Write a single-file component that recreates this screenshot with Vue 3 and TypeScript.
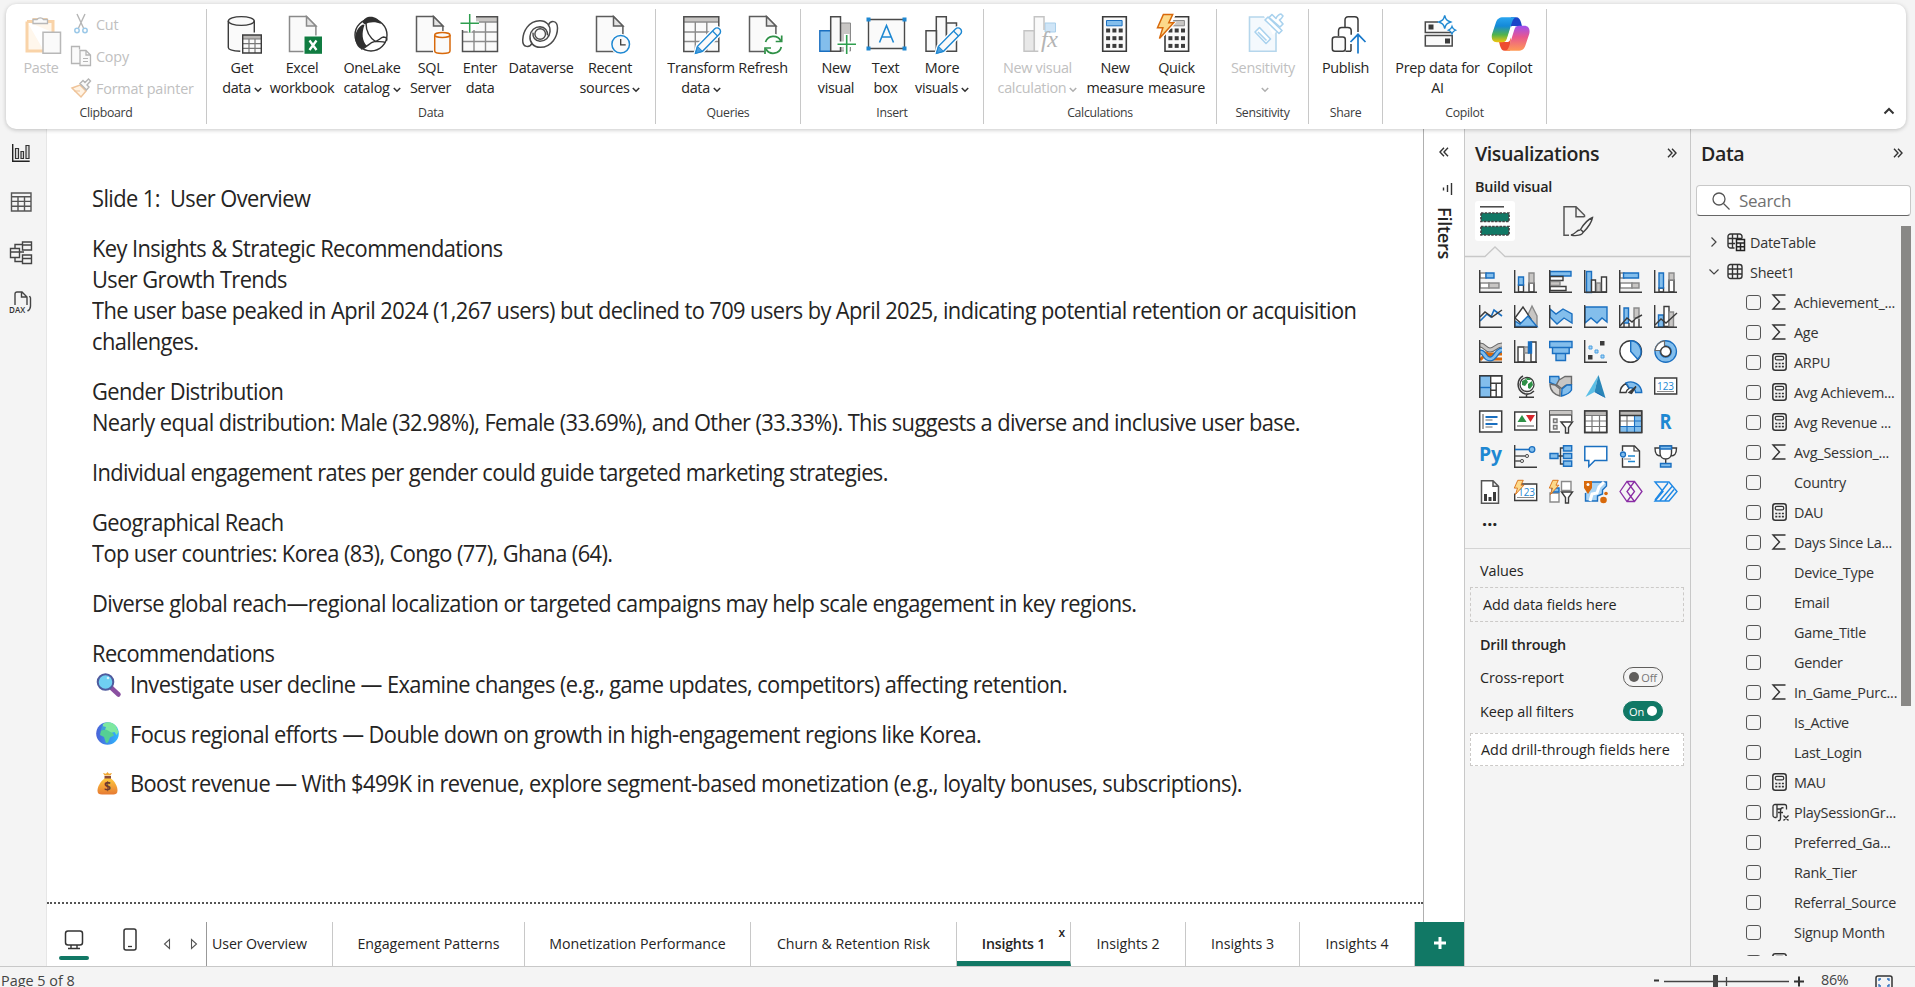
<script setup lang="ts">
interface Cmd { icon: string; lines: string[]; w: number; chevron?: boolean; off?: boolean }
interface Group { label: string; w: number; pad: number; items: Cmd[] }

const page = (x: number, stroke = '#5c5c5c') =>
  `<path d="M${x} 2.5h17l9.400 9.500v25.500h-26.400z" fill="#fafafa" stroke="${stroke}" stroke-width="1.500"/><path d="M${x + 17} 2.500v9.500h9.400z" fill="#e3e3e3" stroke="${stroke}" stroke-width="1.500"/>`
const pencil = `<path d="M14.500 39.300l2-7 17-17.300a3.500 3.500 0 0 1 5 5l-17 17.300z" fill="#fafafa" stroke="#fff" stroke-width="4"/><path d="M14.500 39.300l2-7 17-17.300a3.500 3.500 0 0 1 5 5l-17 17.300z" fill="#fafafa" stroke="#1e88d2" stroke-width="1.400"/><path d="M14.500 39.300l2-7 5 5z" fill="#4a9fe0" stroke="#1e88d2"/><path d="M31.500 17l5 5" stroke="#1e88d2" stroke-width="1.300"/>`
const table = (x: number) =>
  `<path d="M${x} 2.800h35v34.700h-35z" fill="#fafafa"/><path d="M${x} 2.800h35v5h-35z" fill="#c8c6c4"/><path d="M${x} 8h35M${x} 18h35M${x} 27.500h35M${x + 11.500} 8v29.500M${x + 23} 8v29.500" stroke="#8a8a8a" stroke-width="1.400"/><path d="M${x} 2.800h35v34.700h-35z" fill="none" stroke="#4f4f4f" stroke-width="1.500"/>`
const keys = (x: number) =>
  [16.5, 24.2, 31.9].map(y => [0, 6.3, 12.6].map(d => `<path d="M${x + d - 2} ${y - 2}h4v4h-4z" fill="#3b3b3b"/>`).join('')).join('')
const bolt = (s: number) =>
  `<path transform="scale(${s})" d="M6.500 .5h9.500l-4 8.500h5l-14.500 16 3.500-11h-5.500z" fill="#fcd98a" stroke="#d8690b" stroke-width="1.500"/>`

const big: Record<string, string> = {
  paste: `<path d="M6 8h7v-2h12v2h7v11M6 8v29.500h17" transform="translate(0,-.5)" fill="#fff7ec" stroke="#f9d3a8" stroke-width="3"/><path d="M12 9.500v-4h4a4 4 0 0 1 6.500 0h4v4z" fill="#fafafa" stroke="#b8b8b8" stroke-width="1.300"/><path d="M22 18.200h17.500v21h-17.500z" fill="#fafafa" stroke="#b8b8b8" stroke-width="1.500"/>`,
  getdata: `<path d="M6.300 7v26.500c0 2.300 5 3.500 13 3.500v-16h13v-14z" fill="#fafafa"/><ellipse cx="19.300" cy="7" rx="13" ry="4.400" fill="#fafafa" stroke="#3b3b3b" stroke-width="1.400"/><path d="M6.300 7v26.500c0 2.300 5 3.500 12 3.700M32.300 7v11.500" fill="none" stroke="#3b3b3b" stroke-width="1.400"/><path d="M20.700 21h18.600v18h-18.600z" fill="#fafafa"/><path d="M20.700 21h18.600v4h-18.600z" fill="#b9b7b5"/><path d="M20.700 25h18.600M20.700 29.700h18.600M20.700 34.300h18.600M27 25v14M33 25v14" stroke="#777" stroke-width="1.200"/><path d="M20.700 21h18.600v18h-18.600z" fill="none" stroke="#3b3b3b" stroke-width="1.400"/>`,
  excel: page(7.5, '#8a8a8a') + `<path d="M21.500 21.500h19v19h-19z" fill="#fff"/><path d="M22.500 22.500h17.500v17.300h-17.500z" fill="#107c41"/><path d="M27.500 26.500l7 9.500M34.500 26.500l-7 9.500" stroke="#fff" stroke-width="2.300"/>`,
  onelake: `<circle cx="19" cy="21" r="16" fill="#fff" stroke="#333" stroke-width="1.400"/><path d="M10.500 8.500c2-8 15-8 18.500 1.500c-5-2.500-12-2.500-16 .5z" fill="#2f2f2f"/><path d="M11 10.500c-8 4-10.500 16-4 23c2 2.500 6 1 8-1.500c-5-5-5.500-13-2.500-21z" fill="#2f2f2f"/><path d="M14 9c0 9 4 15 10 19M9 35c6-1 8-6.500 13.500-7.500c4 0 5.500-4 9-4.500c3 0 4 2 3 4M22.500 27.500c4 .5 8-.5 11 1" fill="none" stroke="#333" stroke-width="1.400"/>`,
  sql: page(5.5) + `<path d="M22 17h19v24h-19z" fill="#fff"/><path d="M23.700 21v16c0 3.300 15.300 3.300 15.300 0v-16" fill="#fafafa" stroke="#d8690b" stroke-width="1.500"/><ellipse cx="31.350" cy="21" rx="7.650" ry="2.500" fill="#fafafa" stroke="#d8690b" stroke-width="1.500"/>`,
  enter: table(2.5) + `<path d="M0 0h16v16h-16z" fill="#fff"/><path d="M9.700 0v18.500M0 9.300h19" stroke="#fff" stroke-width="4"/><path d="M9.700 0v18.500M.5 9.300h18.500" stroke="#2e9e4e" stroke-width="1.500"/>`,
  dataverse: `<path d="M27.500 11c2-5 9-5 9 3c0 9-6 19-17 19.300c-7 .2-11-5-10.500-11c.5-6 5-9.500 10-9.500c5 .2 8 4 7.500 8.500M11 29c-2 5-9.500 5-9.300-3c.3-9 6-19 17-19.300c7-.2 10.800 5 10.300 11c-.5 6-5 9.500-10 9.500c-5-.2-7.500-4-7-8.500" fill="none" stroke="#4a4a4a" stroke-width="1.500"/><circle cx="19.200" cy="20" r="5.300" fill="#fafafa" stroke="#4a4a4a" stroke-width="1.400"/>`,
  recent: page(6.5) + `<circle cx="30.700" cy="30.300" r="10.500" fill="#fff"/><circle cx="30.700" cy="30.300" r="8.800" fill="#fafafa" stroke="#1e88d2" stroke-width="1.500"/><path d="M30.700 25v5.800h5" fill="none" stroke="#3b3b3b" stroke-width="1.300"/>`,
  transform: table(2.8) + pencil,
  refresh: page(6.5) + `<circle cx="30.300" cy="30.700" r="11" fill="#fff"/><path d="M22.500 28a8.300 8.300 0 0 1 15.300-1M38.300 33a8.300 8.300 0 0 1-15.300 2" fill="none" stroke="#2f9147" stroke-width="1.700"/><path d="M38.700 21.500v6h-6M22 40v-6h6" fill="none" stroke="#2f9147" stroke-width="1.700"/>`,
  newvisual: `<path d="M3.800 16.700h11v20.500h-11z" fill="#83beec" stroke="#1a6fc0" stroke-width="1.400"/><path d="M24.500 9h10v28h-10z" fill="#c8c6c4" stroke="#8a8a8a"/><path d="M14.700 2.800h9.800v34.500h-9.800z" fill="#fafafa" stroke="#4a4a4a" stroke-width="1.500"/><path d="M30.700 20v20.500M20.500 30.300h20" stroke="#fff" stroke-width="5.500"/><path d="M30.700 21v19M21.500 30.300h18.500" stroke="#2e9e4e" stroke-width="1.600"/>`,
  textbox: `<path d="M2.500 5.500h36v29h-36z" fill="#fafafa" stroke="#4a4a4a" stroke-width="1.400"/><path d="M.5 3.500h4v4h-4zM36.500 3.500h4v4h-4zM.5 32.500h4v4h-4zM36.500 32.500h4v4h-4z" fill="#1e88d2"/><path d="M13.500 28.500l7-17 7 17M16 23h9" fill="none" stroke="#1e88d2" stroke-width="1.600"/>`,
  morevisuals: `<path d="M4 16.700h10.500v20.500h-10.500zM24.500 9h10v28.300h-10zM14.300 2.800h10v34.500h-10z" fill="#fafafa" stroke="#4a4a4a" stroke-width="1.500"/>` + pencil,
  newcalc: `<path d="M6 16.700h10.500v20.500h-10.500z" fill="#e8e8e8" stroke="#c4c4c4" stroke-width="1.400"/><path d="M27 9h10.500v9h-10.500z" fill="#cfe5f7" stroke="#a9cfea"/><path d="M26 16v-13.200h-9.700v34.500h4" fill="#fafafa" stroke="#c4c4c4" stroke-width="1.500"/><text x="23" y="33" font-family="Liberation Serif" font-style="italic" font-size="24" fill="#b4b4b4">fx</text>`,
  newmeasure: `<path d="M7.700 2.800h23.600v34.500h-23.600z" fill="#fafafa" stroke="#3b3b3b" stroke-width="1.600"/><path d="M11.500 6.500h15.600v5.300h-15.600z" fill="#83beec" stroke="#1a6fc0"/>` + keys(13.1),
  quick: `<path d="M8 2.800h23.600v34.500h-23.600z" fill="#fafafa" stroke="#3b3b3b" stroke-width="1.600"/><path d="M14 6.500h13.400v5.300h-13.400z" fill="#c8c6c4" stroke="#8a8a8a"/>` + keys(13.4) + `<path d="M5.500 -1h14l-4 9h4l-12 14h-7z" fill="#fff"/>` + bolt(0.98),
  sensitivity: `<path d="M6.500 3h26.500v34.300h-26.500z" fill="#f4f9fd" stroke="#b5d6ec" stroke-width="1.600"/><path d="M20 0l14-3 8 12-12 12z" fill="#fff"/><g fill="#fff" stroke="#a9d2ee" stroke-width="1.600" stroke-linejoin="round"><path d="M12 18l4.500-4.500 11 11.500-4.500 4.500zM15 18l8.500 8.500"/><path d="M22 6l3-3 14 13.500-3 3z"/><path d="M26 3.500l3-3 4 4c1-3 4-4.500 5-4.500l2 2c-1 2-2 3-3.500 4l3.500 4-3 3z"/></g>`,
  publish: `<path d="M19 13v-7c0-2 1-3.200 3.200-3.200h6.600c2 0 3.200 1.200 3.200 3.200v12M12.500 22v-5c0-2 1-3.500 3.200-3.500h6c2 0 3.500 1.200 3.500 3.200v4M25 30v7.300M19.500 37.300h5.500" fill="none" stroke="#3b3b3b" stroke-width="1.500"/><rect x="6.300" y="23" width="13" height="14.300" rx="2.500" fill="#fafafa" stroke="#3b3b3b" stroke-width="1.500"/><path d="M32 20.500v19M24.500 28l7.500-7.700 7.500 7.700" fill="none" stroke="#1979ca" stroke-width="1.700"/>`,
  prep: `<path d="M20 8h-12.700v10.500h26.900v-3M7.300 21.500h26.900v10.500h-26.900z" fill="#fafafa" stroke="#4a4a4a" stroke-width="1.500"/><path d="M10.500 10.500h5v5h-5zM27 24.500h5v5h-5z" fill="#3b3b3b"/><path d="M26.700 1.500c1 4 2 5 6 6.500c-4 1.500-5 2.500-6 6.500c-1-4-2-5-6-6.500c4-1.500 5-2.500 6-6.500z" fill="#fff" stroke="#1e88d2" stroke-width="1.400"/><path d="M34 12.500c.7 2.200 1.300 2.800 3.500 3.700c-2.200 .9-2.800 1.500-3.500 3.700c-.7-2.200-1.300-2.800-3.500-3.700c2.200-.9 2.800-1.500 3.500-3.700z" fill="#fff" stroke="#1e88d2" stroke-width="1.300"/>`,
  copilot: `<defs><linearGradient id="ca" x1="0" y1="0" x2="0" y2="1"><stop offset="0" stop-color="#2aa5f0"/><stop offset=".35" stop-color="#1489d8"/><stop offset=".7" stop-color="#52b44b"/><stop offset="1" stop-color="#f5c60c"/></linearGradient><linearGradient id="cb" x1="0" y1="0" x2="0" y2="1"><stop offset="0" stop-color="#a04ff0"/><stop offset=".45" stop-color="#e8578e"/><stop offset="1" stop-color="#ff9a55"/></linearGradient></defs><path d="M21 3.300h5c3 0 4 2 5 5l1 4h-5c-3 0-5 1-6 4z" fill="#1b44c8"/><path d="M20 36.700h-5c-3 0-4-2-5-5l-1-4h6c3 0 5-2 6-5z" fill="#ee4c30"/><path d="M13.500 3.300h13.500c-3 0-4 2-5 5l-5 16c-1 3-2 4-5 4h-5c-4 0-6-3-5-8l4-12c1-3 3-5 7.500-5z" fill="url(#ca)"/><path d="M27.800 36.700h-13.500c3 0 4-2 5-5l5-16c1-3 2-4 5-4h5c4 0 6 3 5 8l-4 12c-1 3-3 5-7.500 5z" fill="url(#cb)"/><path d="M21.500 12h5c-2 1-3 2-3.500 4.500l-3 9.500c-.5 1.500-1.500 2-3 2h-2.500c1.500-1 2.500-2 3-4z" fill="#fff"/>`,
}

const groups: Group[] = [
  { label: 'Data', w: 449, pad: 10, items: [
    { icon: 'getdata', lines: ['Get', 'data'], w: 50, chevron: true },
    { icon: 'excel', lines: ['Excel', 'workbook'], w: 70 },
    { icon: 'onelake', lines: ['OneLake', 'catalog'], w: 70, chevron: true },
    { icon: 'sql', lines: ['SQL', 'Server'], w: 47 },
    { icon: 'enter', lines: ['Enter', 'data'], w: 52 },
    { icon: 'dataverse', lines: ['Dataverse'], w: 70 },
    { icon: 'recent', lines: ['Recent', 'sources'], w: 68, chevron: true },
  ] },
  { label: 'Queries', w: 145, pad: 8, items: [
    { icon: 'transform', lines: ['Transform', 'data'], w: 74, chevron: true },
    { icon: 'refresh', lines: ['Refresh'], w: 50 },
  ] },
  { label: 'Insert', w: 183, pad: 9, items: [
    { icon: 'newvisual', lines: ['New', 'visual'], w: 52 },
    { icon: 'textbox', lines: ['Text', 'box'], w: 47 },
    { icon: 'morevisuals', lines: ['More', 'visuals'], w: 66, chevron: true },
  ] },
  { label: 'Calculations', w: 233, pad: 8, items: [
    { icon: 'newcalc', lines: ['New visual', 'calculation'], w: 91, chevron: true, off: true },
    { icon: 'newmeasure', lines: ['New', 'measure'], w: 64 },
    { icon: 'quick', lines: ['Quick', 'measure'], w: 59 },
  ] },
  { label: 'Sensitivity', w: 92, pad: 0, items: [
    { icon: 'sensitivity', lines: ['Sensitivity', ''], w: 92, chevron: true, off: true },
  ] },
  { label: 'Share', w: 74, pad: 0, items: [{ icon: 'publish', lines: ['Publish'], w: 73 }] },
  { label: 'Copilot', w: 164, pad: 9, items: [
    { icon: 'prep', lines: ['Prep data for', 'AI'], w: 91 },
    { icon: 'copilot', lines: ['Copilot'], w: 53 },
  ] },
]

const D = '#3b3b3b', B = '#83beec', S = '#1a6fc0', G = '#c8c6c4'
const p = (d: string, fill = 'none', stroke = D, w = 1.4) => `<path d="${d}" fill="${fill}" stroke="${stroke}" stroke-width="${w}"/>`
const axes = p('M.7 0v22.300h22.300')
const vizIcons: string[] = [
  p('M1 3h6v5h-6zM1 13h9v5h-9z', '#fff', '#8a8a8a') + p('M7 3h8v5h-8z', B, S) + p('M10 13h10v5h-10z', G, '#8a8a8a') + axes,
  p('M4.500 15h5v7h-5zM15 13h5v9h-5z', '#fff', D) + p('M4.500 7h5v8h-5z', B, S) + p('M15 3h5v10h-5z', G, '#8a8a8a') + axes,
  p('M1 1.500h21v4.500h-21z', B, S) + p('M1 6.500h13v4h-13zM1 16.500h16v4h-16z', '#fff') + p('M1 11.500h10v4h-10z', G, '#8a8a8a') + axes,
  p('M2.500 1.500h5v21h-5z', B, S) + p('M7.500 10h4v12h-4zM17.500 7h5v15h-5z', '#fff') + p('M12.500 13h4v9h-4z', G, '#8a8a8a') + axes,
  p('M1 3h4v5h-4zM1 13h12v5h-12z', '#fff', '#8a8a8a') + p('M4.500 3h15v5h-15z', B, S) + p('M13 13h7v5h-7z', G, '#8a8a8a') + axes,
  p('M5 18h4.500v4h-4.500zM15 10h5v12h-5z', '#fff') + p('M5 3h4.500v15h-4.500z', B, S) + p('M15 3h5v7h-5z', G, '#8a8a8a') + axes,
  p('M1 16l7-7 4 3 3-7 8 6', 'none', S, 1.6) + p('M1 12l5-5 7 5 10-7', 'none', D, 1.5) + axes,
  p('M12 14l6-13 5 10v11h-11z', G, '#8a8a8a') + p('M1 13l8-11 8 12-8 6z', '#fff') + p('M1 16l5 3 8-8 9 10.500h-22z', B, S) + axes,
  p('M1 4l6 5 7-5 9 5v9l-8-5-7 6-7-7z', B, S) + axes,
  p('M1 2h22v15l-5-4-5 5-6-5-6 5z', B, S) + axes,
  p('M5 3h4.500v15h-4.500z', B, S) + p('M15 3h5v10h-5z', G, '#8a8a8a') + p('M1 21l7-8 5 4 4-4 6-3') + p('M5 18v4M10 18v4M15 15v7M20 14v8') + axes,
  p('M4.500 10h5v12h-5z', B, S) + p('M10 1.500h5v20h-5z', '#fff') + p('M15 7h4.500v15h-4.500z', G, '#8a8a8a') + p('M1 20l6-6 5 4 11-10') + axes,
  p('M1 20l6-6h16M1 13h7l6 6h9', 'none', '#d8690b', 3) + p('M1 5c5 0 5 5 10 5s6-5 12-5', 'none', '#6a6a6a', 5) + p('M1 5c5 0 5 5 10 5s6-5 12-5', 'none', G, 3) + p('M1 12c5-1 4 7 10 7s6-9 12-9', 'none', S, 5) + p('M1 12c5-1 4 7 10 7s6-9 12-9', 'none', B, 2.6) + axes,
  p('M4 7h6v15h-6zM17 2h5v20h-5z', '#fff') + p('M10.500 7h4v6h-4z', G, '#8a8a8a') + p('M14.500 2h3v11h-3z', S, S) + axes,
  p('M.7 1.500h22.300v6h-22.300zM3.500 7.500h16.700v6h-16.700zM7 13.500h9.500v7h-9.500z', B, S),
  axes + '<path d="M16 1h4.500v4.500h-4.500zM4 15h4.500v4.500h-4.500z" fill="#3b3b3b"/>' + p('M5 6h3v3h-3zM11 10h3v3h-3zM17 15h3v3h-3z', '#a9d4f5', '#4a9fe0', 1),
  '<circle cx="11.700" cy="11.500" r="10.800" fill="#fff" stroke="#3b3b3b" stroke-width="1.400"/>' + p('M11.700 .7a10.800 10.800 0 0 1 7 18.500l-7-7.700z', B, S),
  '<circle cx="11.700" cy="11.500" r="8.200" fill="none" stroke="#1a6fc0" stroke-width="6.400"/><circle cx="11.700" cy="11.500" r="8.200" fill="none" stroke="#83beec" stroke-width="3.800"/>' + p('M1 10.500a10.800 10.800 0 0 1 9.500-9.700v6l-4 3.700z', '#fff', '#6a6a6a', 1.2) + '<circle cx="11.700" cy="11.500" r="5" fill="#fff" stroke="#3b3b3b" stroke-width="1.300"/>',
  p('M.7 .7h11v21.600h-11z', B, S) + p('M11.700 .7h11v7.500h-11zM11.700 8.200h5.500v7h-5.500zM17.200 8.200h5.500v14h-5.500zM11.700 15.200h5.500v7h-5.500z', '#fff') + p('M.7 12.500h11', 'none', S) + p('M.7 .7h22v21.600h-22z'),
  '<circle cx="13" cy="9.500" r="7" fill="#fff" stroke="#3b3b3b" stroke-width="1.300"/><path d="M8 6l4-2 2 3-3 4-3-1zM14 9l4-3 1 4-3 4-2-1zM12 3h3l2 2h-4z" fill="#2f9147"/>' + p('M9 1c-6 3-7 13 0 17c4 2 8 1 11-2M12.500 19v3M5 22.300h15', 'none', D, 1.500),
  p('M.7 1.500h9l1 5-3 4-7-3z', B, S) + p('M10 5l6-3.500h6.500v8l-6 1-4 3-5-4z', G, '#6a6a6a') + p('M1 9l5 1 5 4v7c-5-1-10-5-10-12z', '#d5d3d1', '#6a6a6a') + p('M13 14l5-4h4.500v5c-3 5-7 5-10 6z', B, S),
  '<path d="M14.500 0l-13 22 9-5z" fill="#5cbfe6"/><path d="M14.500 0l7 23-11-6z" fill="#2a86b8"/><path d="M10.500 17l11 6-7-5z" fill="#1767b8"/>',
  p('M1 17.500a10.800 10.800 0 0 1 6-9l3 5a6 6 0 0 0-3 4z', '#fff') + p('M7 8a11 11 0 0 1 15.700 9.500h-6a5 5 0 0 0-6.500-4.500z', B, S) + p('M10 17.500l7-6-4.500 7z', D),
  p('M.7 3h22v16h-22z', '#fff') + '<text x="3" y="15" font-size="10" font-family="Open Sans" fill="#1e88d2">123</text>' + p('M3 16.500h17', 'none', '#8a8a8a', 1),
  p('M.7 1h22v21h-22z', '#fff', D, 1.500) + p('M4 4v15', 'none', '#6a6a6a', 1.2) + p('M6.500 7h12M6.500 14h12', 'none', S, 2) + p('M6.500 10h7M6.500 17h7', 'none', '#6a6a6a', 1.2),
  p('M.7 2h22v18h-22z', '#fff', D) + '<path d="M3.500 12l4.500-7 4.500 7z" fill="#2f9147"/><path d="M12 5h9l-4.500 7z" fill="#d8262c"/>' + p('M3 16h17', 'none', '#6a6a6a', 1.200),
  p('M.7 1h22v21h-22z', '#fff', '#555') + '<path d="M1 1h21.500v4h-21.500z" fill="#c8c6c4"/>' + p('M1 5h21.500', 'none', '#555') + p('M4.500 9h3.500v3.500h-3.500zM4.500 15.500h3.500v3.500h-3.500z', '#eee', '#777') + '<path d="M11 11h13v13h-13z" fill="#f4f4f4"/>' + p('M12 12h11.500l-4 5.500v5.500h-3v-5.500z', '#fff', D),
  p('M.7 1h22v21.500h-22z', '#fff') + '<path d="M1 1h21.500v4h-21.500z" fill="#b9b7b5"/>' + p('M1 5.500h21.500M1 11h21.500M1 16.500h21.500M8 5.500v16.500M15.500 5.500v16.500', 'none', '#777', 1.200) + p('M.7 1h22v21.500h-22z', 'none', D, 1.600),
  p('M.7 1h22v21.500h-22z', '#fff') + '<path d="M1 1h21.500v4h-21.500z" fill="#b9b7b5"/><path d="M15.500 5.500h7v17h-21.500v-6h14.500z" fill="#83beec"/>' + p('M8 5.500v11M1 11h14.500', 'none', '#777', 1.200) + p('M15.500 5.500v17M15.500 11h7M1 16.500h21.500M8 16.500v6', 'none', S, 1.100) + p('M.7 1h22v21.500h-22zM1 5.500h21.500', 'none', D, 1.500),
  '<text x="5.500" y="19" font-size="21" font-weight="700" font-family="Open Sans" textLength="12" lengthAdjust="spacingAndGlyphs" fill="#1e88d2">R</text>',
  '<text x="0" y="16" font-size="20" font-weight="700" font-family="Open Sans" textLength="23" lengthAdjust="spacingAndGlyphs" fill="#1e88d2">Py</text>',
  axes + p('M1 4.500h14', 'none', S, 1.600) + '<circle cx="18" cy="4.500" r="2.800" fill="#83beec" stroke="#1a6fc0" stroke-width="1.300"/><circle cx="13" cy="11" r="1.600" fill="#ddd" stroke="#555"/><circle cx="8" cy="16" r="1.600" fill="#ddd" stroke="#555"/>' + p('M1 11h10M1 16h5', 'none', '#555', 1.300),
  p('M9 11h6M11.500 11v-8h4M11.500 11v8h4', 'none', D) + p('M1 8.500h8v5h-8zM14.500 .8h8.200v5.200h-8.200zM14.500 8.500h8.200v5h-8.200zM14.500 16h8.200v5.200h-8.200z', B, S),
  p('M.8 1.500h22v14h-12l-6 6v-6h-4z', '#fff', S, 1.500),
  p('M3.500 6v-5h12l5 5v16h-17v-9', '#fff') + p('M15 1v5h5.500', 'none', D, 1.200) + '<circle cx="4" cy="9.500" r="2.500" fill="#83beec" stroke="#1a6fc0" stroke-width="1.300"/>' + p('M9 11h7M9 16.500h7', 'none', '#1e88d2', 1.500) + p('M5 14h7', 'none', '#8a8a8a', 1),
  p('M6 1h11.500v7c0 8-11.500 8-11.500 0zM6 3h-5c0 5 1 8 6 8M17.500 3h5c0 5-1 8-6 8M11.700 14v4', '#fff', D, 1.400) + p('M6 1h11.500v3h-11.500z', B, S) + p('M6.500 18.500h10.500v3.500h-10.500z', B, S),
  p('M2.500 .7h11.500l5.500 5.500v17h-17zM14 .7v5.500h5.500', '#fff', '#555', 1.500) + '<path d="M5 14h3v7h-3zM9.500 17h3v4h-3zM14 12h3v9h-3z" fill="#3b3b3b"/>',
  p('M4 4h18.700v16.500h-22v-7', '#fff') + '<text x="4" y="15.500" font-size="10" font-family="Open Sans" fill="#1e88d2">123</text>' + p('M3 17.500h17', 'none', '#8a8a8a', 1) + bolt(0.58),
  p('M12.500 1.500h9.500v9h-9.500zM1 13h9v9h-9z', '#fff', '#8a8a8a') + p('M3 8h7v4h-7z', B, S) + bolt(0.58) + p('M12.500 12h11l-4 5.500v5.500h-3v-5.500z', '#fff', D),
  p('M6 2h16.500v4l-4 4v4l-5 2v5h-12v-8', '#a9d4f5', S) + p('M20 2l-5 5-2 6-5 1-2 7', 'none', '#fff', 3) + '<path d="M0 1h8v7l-4 6-4-6z" fill="#d8690b"/><circle cx="4" cy="4.500" r="1.500" fill="#fff"/><circle cx="19.500" cy="20" r="3.300" fill="#d8690b"/><circle cx="22" cy="13.500" r="1.800" fill="#d8690b"/>',
  p('M1 11.500l7-10h7.500l7.500 10-7.500 10h-7.500zM8 1.500l7.500 10-7.500 10M15.500 1.500l-7.500 10 7.500 10', 'none', '#8a2da5', 1.300),
  p('M1 2h14l8 9.500-8 9.500h-14l8-9.500zM1 20l13-17M6 20.500l12-14M11 20.500l9-11', 'none', '#1e88e5', 1.400),
]

const paragraphs: string[][] = [
  ['Slide 1:\u00a0 User Overview'],
  ['Key Insights & Strategic Recommendations', 'User Growth Trends', 'The user base peaked in April 2024 (1,267 users) but declined to 709 users by April 2025, indicating potential retention or acquisition', 'challenges.'],
  ['Gender Distribution', 'Nearly equal distribution: Male (32.98%), Female (33.69%), and Other (33.33%). This suggests a diverse and inclusive user base.'],
  ['Individual engagement rates per gender could guide targeted marketing strategies.'],
  ['Geographical Reach', 'Top user countries: Korea (83), Congo (77), Ghana (64).'],
  ['Diverse global reach—regional localization or targeted campaigns may help scale engagement in key regions.'],
]
const bullets = [
  { art: '<path d="M15.500 15l7 6.500" stroke="#8a4fa0" stroke-width="4.500" stroke-linecap="round"/><circle cx="9.500" cy="9" r="7.800" fill="#6fd0f2" stroke="#4f5b9e" stroke-width="2"/><circle cx="12" cy="5" r="1.300" fill="#d5f3ff"/>', text: 'Investigate user decline — Examine changes (e.g., game updates, competitors) affecting retention.' },
  { art: '<defs><linearGradient id="sea" x1="0" y1="0" x2="1" y2="0"><stop offset="0" stop-color="#4a62d8"/><stop offset="1" stop-color="#2fb8ff"/></linearGradient></defs><circle cx="11.500" cy="11.500" r="11.300" fill="url(#sea)"/><path d="M7 2c4-3 10-2 13 2l2.500 6-2 3-2-3-4 1-3-2-4 0-1-3z" fill="#7de8a0"/><path d="M5 8.500l5-1 2 1 5 3 1 2-4 2-2 5-2 .5-2-6-4-2z" fill="#55cf94"/><path d="M6 4l4 1-1 3-4 0z" fill="#3f9fd8"/>', text: 'Focus regional efforts — Double down on growth in high-engagement regions like Korea.' },
  { art: '<defs><linearGradient id="sack" x1="0" y1="0" x2="0" y2="1"><stop offset="0" stop-color="#ffc83d"/><stop offset="1" stop-color="#e67a32"/></linearGradient></defs><path d="M8.500 3.500l-1.500-2.500 3 .7 1.500-1.700 1.500 1.700 3-.7-1.500 2.500z" fill="#f0a52e"/><path d="M8.500 4h6.500v3h-6.500z" fill="#8a4a3a"/><path d="M8.500 6.500h6.500c4 3 6.500 8 6.500 12c0 3-2 4-4 4h-11.500c-3 0-4.500-1-4.500-4c0-4 3-9 7-12z" fill="url(#sack)"/><text x="8" y="19" font-family="Open Sans" font-size="12" font-weight="700" fill="#6d3b2e">$</text>', text: 'Boost revenue — With $499K in revenue, explore segment-based monetization (e.g., loyalty bonuses, subscriptions).' },
]

const tabs = [
  { t: 'User Overview', w: 126, first: true }, { t: 'Engagement Patterns', w: 192 }, { t: 'Monetization Performance', w: 226 },
  { t: 'Churn & Retention Risk', w: 206 }, { t: 'Insights 1', w: 114, on: true }, { t: 'Insights 2', w: 115 }, { t: 'Insights 3', w: 114 }, { t: 'Insights 4', w: 115 },
]

const calc = '<rect x=".8" y=".8" width="13.400" height="16.400" rx="2.500" fill="none" stroke="#333" stroke-width="1.500"/><rect x="3.300" y="3.300" width="8.400" height="3.600" rx="1.500" fill="none" stroke="#333" stroke-width="1.200"/><path d="M3.300 10.500h2M6.600 10.500h2M9.900 10.500h2M3.300 13.700h2M6.600 13.700h2M9.900 13.700h2" stroke="#333" stroke-width="1.700"/>'
const fieldIcons: Record<string, string> = {
  sum: '<path d="M13.500 2h-12.500l6.500 7-6.500 7h12.500" fill="none" stroke="#333" stroke-width="1.400"/>',
  calc,
  group: '<path d="M4.500 14.500h-1.500a2 2 0 0 1-2-2v-9a2 2 0 0 1 2-2h9.500a2 2 0 0 1 2 2v3M5 1.500v13M5 6h4" fill="none" stroke="#333" stroke-width="1.300"/><path d="M11.500 5c-3-1-3 2-3 5v5c0 2-1 3-2.500 2.500M6 9.500h5M11.500 12.500l5 5M16.500 12.500l-5 5" fill="none" stroke="#333" stroke-width="1.400"/>',
  none: '',
}
const fields: [string, string][] = [
  ['Achievement_...', 'sum'], ['Age', 'sum'], ['ARPU', 'calc'], ['Avg Achievem...', 'calc'], ['Avg Revenue ...', 'calc'], ['Avg_Session_...', 'sum'],
  ['Country', 'none'], ['DAU', 'calc'], ['Days Since La...', 'sum'], ['Device_Type', 'none'], ['Email', 'none'], ['Game_Title', 'none'], ['Gender', 'none'],
  ['In_Game_Purc...', 'sum'], ['Is_Active', 'none'], ['Last_Login', 'none'], ['MAU', 'calc'], ['PlaySessionGr...', 'group'], ['Preferred_Ga...', 'none'],
  ['Rank_Tier', 'none'], ['Referral_Source', 'none'], ['Signup Month', 'none'], ['', 'calc'],
]
</script>

<template>
  <div class="app">
    <header class="ribbon">
      <section class="group clip">
        <div class="clip-body">
          <div class="cmd off paste">
            <svg class="big" viewBox="0 0 40 40" v-html="big.paste" />
            <span>Paste</span>
          </div>
          <div class="clip-list">
            <div class="mini"><svg viewBox="0 0 20 20"><path d="M6 0l6.500 14M14 0l-6.500 14" stroke="#b5b5b5" stroke-width="1.400" /><circle cx="6" cy="16.500" r="2.200" fill="none" stroke="#9cc9e8" stroke-width="1.500" /><circle cx="14" cy="16.500" r="2.200" fill="none" stroke="#9cc9e8" stroke-width="1.500" /></svg>Cut</div>
            <div class="mini"><svg viewBox="0 0 20 20"><path d="M9 17.500h-8.500v-17h8v3" fill="#fafafa" stroke="#b5b5b5" stroke-width="1.300" /><path d="M9 4.500h6l4.500 4.500v10.500h-10.500zM15 4.500v4.500h4.500" fill="#fafafa" stroke="#b5b5b5" stroke-width="1.300" /><path d="M12 12.500h5M12 15.500h5" stroke="#b5b5b5" /></svg>Copy</div>
            <div class="mini"><svg viewBox="0 0 20 20"><path d="M1 10l8-3 6 6-5 6z" fill="#fff3e4" stroke="#efc49a" stroke-width="1.500" /><path d="M3 13l6 0" stroke="#efc49a" /><path d="M9 5.500l3-3 2 2 3.500-3.500 2 2-3.500 4 2 2-2.500 3z" fill="#fafafa" stroke="#b5b5b5" stroke-width="1.400" /></svg>Format painter</div>
          </div>
        </div>
        <div class="glabel">Clipboard</div>
      </section>
      <section v-for="g in groups" :key="g.label" class="group" :style="{ width: g.w + 'px' }">
        <div class="cmds" :style="{ paddingLeft: g.pad + 'px' }">
          <div v-for="c in g.items" :key="c.icon" class="cmd" :class="[{ off: c.off }, c.icon]" :style="{ width: c.w + 'px' }">
            <svg class="big" viewBox="0 0 40 40" v-html="big[c.icon]" />
            <span v-for="(l, i) in c.lines" :key="i">{{ l }}<svg v-if="c.chevron && i === 1" class="chev" viewBox="0 0 8 6"><path d="M.8 1l3.200 3.200 3.200-3.200" /></svg></span>
          </div>
        </div>
        <div class="glabel">{{ g.label }}</div>
      </section>
      <svg class="collapse" viewBox="0 0 12 8"><path d="M1.500 6.500l4.500-4.500 4.500 4.500" fill="none" stroke="#333" stroke-width="2" /></svg>
    </header>

    <div class="work">
      <nav class="rail">
        <svg viewBox="0 0 24 24"><path d="M3.700 3v17.300h17" fill="none" stroke="#222" stroke-width="1.400" /><path d="M6.500 7.500h3v10h-3zM12 10.500h2.500v7h-2.500zM17 4.500h3v13h-3z" fill="#ddd" stroke="#333" stroke-width="1.200" /></svg>
        <svg viewBox="0 0 24 24"><path d="M2.500 2h19.500v18h-19.500zM2.500 5.700h19.500M2.500 10.400h19.500M2.500 15.200h19.500M9 5.700v14M15.500 5.700v14" fill="none" stroke="#555" stroke-width="1.400" /></svg>
        <svg viewBox="0 0 24 24"><path d="M13.500 1h9v8h-9zM13.500 4h9M13.500 14h9v8.500h-9zM13.500 17.500h9M1.500 7.500h9v9h-9zM1.500 11h9M6 7.500v-4h7.500M6 16.500v4h7.500M10 11h5" fill="none" stroke="#444" stroke-width="1.400" /></svg>
        <svg viewBox="0 0 24 24"><path d="M6 14v-11a2 2 0 0 1 2-2h5l5 5v8M12.500 1v5h5.500M20.500 5l1 2v8c0 3-1 4-3 5" fill="none" stroke="#444" stroke-width="1.400" /><text x="0" y="21.500" font-family="Open Sans" font-weight="600" font-size="8" fill="#333" textLength="16">DAX</text></svg>
      </nav>

      <main class="center">
        <div class="canvas">
          <div v-for="(par, i) in paragraphs" :key="i" class="par">
            <div v-for="l in par" :key="l" class="line"><span>{{ l }}</span></div>
          </div>
          <div class="line"><span>Recommendations</span></div>
          <div v-for="b in bullets" :key="b.text" class="line bullet"><svg viewBox="0 0 24 24" v-html="b.art" /><span>{{ b.text }}</span></div>
        </div>
      </main>

      <aside class="filters">
        <svg class="dbl" viewBox="0 0 10 10"><path d="M5 .8l-4 4.200 4 4.200M9 .8l-4 4.200 4 4.200" /></svg>
        <svg class="ficon" viewBox="0 0 12 12"><path d="M10.500 0v12M6.500 2v7M2.500 4.500v3" stroke="#333" stroke-width="1.400" /></svg>
        <div class="ftext">Filters</div>
      </aside>

      <aside class="viz">
        <div class="head"><h2>Visualizations</h2><svg class="dbl" viewBox="0 0 10 10"><path d="M1 .8l4 4.200-4 4.200M5 .8l4 4.200-4 4.200" /></svg></div>
        <div class="sub">Build visual</div>
        <div class="modes">
          <div class="mode on"><svg viewBox="0 0 30 30"><path d="M0 .8h24" stroke="#444" stroke-width="1.500" /><path d="M1 7h28v8.500h-28zM1 20.500h28v8.500h-28z" fill="#117865" stroke="#444" stroke-width="1.700" stroke-dasharray="2.500 1.200" /></svg></div>
          <div class="mode"><svg viewBox="0 0 30 30"><path d="M6 29.200h-5v-28.400h12l8.500 8.500v2M13 .8v10h8" fill="none" stroke="#555" stroke-width="1.500" /><path d="M29.500 11.500c-5 2-9 7-12 12l3 2.500c4-4 8-9 9-14.500zM17 24c-4 0-4 4-9 5c5 1.500 12 0 12-3" fill="#f4f4f4" stroke="#444" stroke-width="1.400" /></svg></div>
        </div>
        <svg class="notch" viewBox="0 0 225 12"><path d="M0 10.500h20l10-9.500 10 9.500h185" fill="none" stroke="#c8c8c8" stroke-width="1.300" /></svg>
        <div class="gallery"><svg v-for="(v, i) in vizIcons" :key="i" viewBox="0 0 24 24" v-html="v" /></div>
        <div class="more">...</div>
        <div class="wells">
          <div class="wl values">Values</div>
          <div class="well">Add data fields here</div>
          <div class="wl drill">Drill through</div>
          <div class="sw"><span>Cross-report</span><i class="tog"><b></b>Off</i></div>
          <div class="sw keep"><span>Keep all filters</span><i class="tog yes">On<b></b></i></div>
          <div class="well white">Add drill-through fields here</div>
        </div>
      </aside>

      <aside class="data">
        <div class="head"><h2>Data</h2><svg class="dbl" viewBox="0 0 10 10"><path d="M1 .8l4 4.200-4 4.200M5 .8l4 4.200-4 4.200" /></svg></div>
        <div class="search"><svg viewBox="0 0 18 18"><circle cx="7" cy="7" r="6" fill="none" stroke="#555" stroke-width="1.300" /><path d="M11.500 11.500l6 6" stroke="#555" stroke-width="1.300" /></svg>Search</div>
        <div class="tree">
          <div class="list">
            <div class="trow"><svg class="arr" viewBox="0 0 10 10"><path d="M2.500 .5l4.500 4.500-4.500 4.500" /></svg><svg class="tic" viewBox="0 0 19 18"><path d="M7.500 15h-4a2.500 2.500 0 0 1-2.500-2.500v-9a2.500 2.500 0 0 1 2.500-2.500h9a2.500 2.500 0 0 1 2.500 2.500v2M5.500 1v14M10.500 1v4M1 5.500h14M1 10.500h7" fill="none" stroke="#333" stroke-width="1.400" /><path d="M9.500 6.500h8v11h-8zM9.500 10h8M9.500 13.700h8M13.500 10v7.500" fill="#f4f4f4" stroke="#222" stroke-width="1.500" /></svg><span>DateTable</span></div>
            <div class="trow"><svg class="arr" viewBox="0 0 10 10"><path d="M.5 2.500l4.500 4.500 4.500-4.500" /></svg><svg class="tic" viewBox="0 0 19 18"><rect x="1" y="1.500" width="14" height="14" rx="2.500" fill="none" stroke="#333" stroke-width="1.400" /><path d="M5.500 1.500v14M10.500 1.500v14M1 6h14M1 11h14" stroke="#333" stroke-width="1.400" /></svg><span>Sheet1</span></div>
            <div v-for="(f, i) in fields" :key="i" class="frow"><i class="box"></i><svg class="fic" viewBox="0 0 18 18" v-html="fieldIcons[f[1]]" /><span>{{ f[0] }}</span></div>
          </div>
          <div class="thumb"></div>
        </div>
      </aside>

      <footer class="tabs">
        <div class="view on"><svg viewBox="0 0 20 20"><rect x="1.500" y="1" width="17" height="14" rx="2.500" fill="none" stroke="#333" stroke-width="1.500" /><path d="M7 15v3M13 15v3M4 18.500h12" stroke="#333" stroke-width="1.400" /></svg></div>
        <div class="view phone"><svg viewBox="0 0 14 24"><rect x="1" y="1" width="12" height="21" rx="2" fill="none" stroke="#333" stroke-width="1.500" /><path d="M5 18.500h4" stroke="#333" stroke-width="1.300" /></svg></div>
        <svg class="tri" viewBox="0 0 8 12"><path d="M6.500 1.500v9l-5-4.500z" /></svg>
        <svg class="tri" viewBox="0 0 8 12"><path d="M1.500 1.500v9l5-4.500z" /></svg>
        <div class="strip">
          <div v-for="t in tabs" :key="t.t" class="tab" :class="{ on: t.on, first: t.first }" :style="{ width: t.w + 'px' }"><span>{{ t.t }}</span><em v-if="t.on">x</em></div>
          <div class="add"><svg viewBox="0 0 14 14"><path d="M7 1v12M1 7h12" stroke="#fff" stroke-width="3" /></svg></div>
        </div>
      </footer>
    </div>

    <div class="status">
      <span class="pg">Page 5 of 8</span>
      <div class="zoom">
        <svg class="slider" viewBox="0 0 152 20"><path d="M10 10.500h125M72.500 6v9" stroke="#444" stroke-width="1.300" /><path d="M0 9.500h5M140 10.500h10M145 5.500v10" stroke="#333" stroke-width="2" /><path d="M59 4h5v14h-5z" fill="#444" /></svg>
        <span class="pct">86%</span>
        <svg class="fit" viewBox="0 0 18 16"><rect x="1" y="1" width="16" height="13" rx="2" fill="none" stroke="#333" stroke-width="1.500" /><path d="M6 4h-2v2M12 4h2v2M4 9v2h2M14 9v2h-2" fill="none" stroke="#2a6fc0" stroke-width="1.300" /></svg>
      </div>
    </div>
  </div>
</template>

<style>
html, body { margin: 0; overflow: hidden; }
</style>
<style scoped>
.app { width: 1915px; height: 987px; background: #f4f4f4; display: flex; flex-direction: column; overflow: hidden; font-family: "Open Sans", "Noto Sans", sans-serif; color: #252423; font-size: 14.4px; letter-spacing: -.3px; }
* { box-sizing: border-box; }
svg { display: block; overflow: visible; flex: none; }
.ribbon { height: 125px; width: 1900px; margin: 4px 0 0 6px; background: #fff; border-radius: 10px; box-shadow: 0 1px 4px rgba(0,0,0,.22); display: flex; position: relative; z-index: 2; flex: none; }
.group { position: relative; flex: none; height: 115px; margin-top: 5px; border-right: 1px solid #c8c8c8; display: flex; flex-direction: column; justify-content: space-between; }
.clip { width: 201px; }
.clip-body { display: flex; }
.cmds { display: flex; }
.cmd { display: flex; flex-direction: column; align-items: center; padding-top: 5px; white-space: nowrap; flex: none; }
.cmd span { line-height: 20px; height: 20px; display: flex; align-items: center; }
.big { width: 40px; height: 40px; margin-bottom: 4px; }
.cmd.off, .mini { color: #c0c0c0; }
.paste { width: 62px; margin-left: 4px; }
.clip-list { display: flex; flex-direction: column; gap: 12px; padding-top: 5px; }
.mini { display: flex; align-items: center; gap: 5px; height: 20px; white-space: nowrap; letter-spacing: -.2px; }
.mini svg { width: 20px; height: 20px; }
.clip-list .mini { margin-left: -1px; }
.glabel { text-align: center; font-size: 12.300px; line-height: 18px; margin-bottom: 2px; color: #3b3b3b; }
.chev { width: 8px; height: 6px; margin: 3px 0 0 3px; }
.chev path { fill: none; stroke: #333; stroke-width: 1.6; }
.off .chev path { stroke: #b0b0b0; }
.collapse { width: 12px; height: 8px; margin: 103px 0 0 336px; }

.work { flex: none; height: 838px; display: grid; grid-template-columns: 47px 1377px 41px 226px 224px; grid-template-rows: 793px 44px; border-bottom: 1px solid #c8c8c8; }
.rail { grid-column: 1; grid-row: 1 / 3; border-right: 1px solid #e6e6e6; display: flex; flex-direction: column; padding: 12px 0 0 9px; gap: 26px; }
.rail svg { width: 24px; height: 24px; }
.center { grid-column: 2; grid-row: 1; background: #fff; border-right: 1px solid #b0b0b0; padding-bottom: 18px; }
.canvas { height: 775px; border-bottom: 2px dotted #555; padding: 54px 0 0 45px; color: #252423; }
.par { margin-bottom: 19px; }
.line { font-size: 23px; line-height: 31px; height: 31px; letter-spacing: -.62px; white-space: nowrap; }
.line span { display: inline-block; transform: scaleX(.95); transform-origin: 0 50%; }
.bullet { display: flex; align-items: center; margin-bottom: 18.500px; }
.bullet svg { width: 24px; height: 24px; margin: 0 10px 0 4px; }
.filters { background: #fff; grid-column: 3; grid-row: 1; border-right: 1px solid #c8c8c8; display: flex; flex-direction: column; align-items: center; padding-top: 18px; }
.dbl { width: 10px; height: 10px; }
.dbl path { fill: none; stroke: #333; stroke-width: 1.4; }
.ficon { width: 12px; height: 12px; margin: 26px 0 0 5px; }
.ftext { writing-mode: vertical-rl; font-weight: 600; font-size: 18.200px; line-height: 24px; margin: 12px 0 0 2px; }
.viz { grid-column: 4; grid-row: 1 / 3; border-right: 1px solid #c8c8c8; display: flex; flex-direction: column; letter-spacing: -.05px; }
.head { display: flex; justify-content: space-between; align-items: center; height: 28px; margin: 10px 13px 0 10px; flex: none; }
h2 { font-size: 19.600px; font-weight: 600; margin: 0; letter-spacing: -.4px; }
.sub { font-weight: 600; font-size: 14.400px; letter-spacing: -.2px; line-height: 20px; margin: 10px 0 0 10px; }
.modes { display: flex; gap: 43px; margin: 4px 0 0 10px; }
.mode { width: 40px; height: 40px; border-radius: 3px; display: flex; align-items: center; justify-content: center; }
.mode.on { background: #fff; }
.mode svg { width: 30px; height: 30px; }
.notch { width: 225px; height: 12px; margin-top: 5px; }
.gallery { display: grid; grid-template-columns: repeat(6, 35px); grid-auto-rows: 35px; margin: 12px 0 0 14px; }
.gallery svg { width: 24px; height: 24px; }
.more { font-size: 18px; font-weight: 700; letter-spacing: 0; line-height: 20px; margin: -6px 0 0 17px; height: 34px; }
.wells { border-top: 1px solid #d4d4d4; padding: 11px 6px 0 5px; flex: 1; margin-top: 5px; }
.wl { line-height: 22px; padding-left: 10px; }
.well { border: 1.500px dashed #cccac8; height: 35px; margin-top: 5px; display: flex; align-items: center; padding-left: 12px; white-space: nowrap; }
.well.white { background: #fff; height: 33px; padding-left: 10px; margin-top: 11px; letter-spacing: 0; }
.drill { font-weight: 600; margin-top: 12px; letter-spacing: -.2px; }
.sw { display: flex; justify-content: space-between; align-items: center; height: 22px; padding: 0 21px 0 10px; margin-top: 10px; }
.sw.keep { margin-top: 12px; }
.tog { width: 40px; height: 20px; border: 1px solid #605e5c; border-radius: 10px; font-style: normal; font-size: 11px; color: #777; display: flex; align-items: center; justify-content: space-between; padding: 0 5px; background: #f4f4f4; }
.tog b { width: 10px; height: 10px; border-radius: 50%; background: #605e5c; }
.tog.yes { background: #117865; border-color: #117865; color: #fff; }
.tog.yes b { background: #fff; }
.data { grid-column: 5; grid-row: 1 / 3; display: flex; flex-direction: column; overflow: hidden; }
.data .head { margin: 10px 12px 0 10px; }
.search { margin: 18px 4px 0 5px; height: 31px; background: #fff; border: 1px solid #c8c8c8; border-bottom-color: #666; border-radius: 4px; display: flex; align-items: center; gap: 9px; padding-left: 15px; font-size: 17px; color: #707070; flex: none; }
.search svg { width: 18px; height: 18px; }
.tree { display: flex; justify-content: space-between; margin: 10px 4px 0 0; height: 730px; }
.list { flex: 1; overflow: hidden; padding-top: 1px; letter-spacing: -.25px; color: #333; }
.trow { height: 30px; display: flex; align-items: center; padding-left: 18px; }
.arr { width: 10px; height: 10px; margin-right: 8px; }
.arr path { fill: none; stroke: #444; stroke-width: 1.200; }
.tic { width: 19px; height: 18px; margin-right: 4px; }
.frow { height: 30px; display: flex; align-items: center; padding-left: 55px; white-space: nowrap; }
.box { width: 15px; height: 15px; border: 1.200px solid #555; border-radius: 3px; margin-right: 11px; flex: none; }
.fic { width: 18px; height: 18px; margin-right: 4px; }
.thumb { width: 10px; height: 480px; background: #898886; }

.tabs { grid-column: 2 / 4; grid-row: 2; background: #fff; display: flex; align-items: center; border-right: 1px solid #c8c8c8; z-index: 1; letter-spacing: 0; }
.view { height: 44px; width: 28px; display: flex; flex-direction: column; align-items: center; padding-top: 8px; }
.view svg { width: 20px; height: 20px; }
.view.on { margin-left: 13px; border-bottom: 0; }
.view.on::after { content: ""; width: 30px; height: 4px; border-radius: 2px; background: #117865; margin-top: 6px; }
.phone { margin-left: 28px; padding-top: 6px; }
.phone svg { width: 14px; height: 24px; }
.tri { width: 8px; height: 12px; margin-left: 19px; }
.tri path { fill: none; stroke: #555; stroke-width: 1.100; }
.strip { display: flex; margin-left: auto; height: 44px; border-left: 1px solid #999; }
.tab { border-right: 1px solid #c8c8c8; display: flex; align-items: center; justify-content: center; position: relative; white-space: nowrap; font-size: 14.200px; padding-bottom: 1px; }
.tab.first { justify-content: flex-start; padding-left: 5px; letter-spacing: -.1px; }
.tab.on { font-weight: 600; border-bottom: 5px solid #117865; padding-top: 4px; letter-spacing: -.2px; }
.tab em { position: absolute; right: 5px; top: 3px; font-style: normal; font-size: 12px; line-height: 16px; }
.add { width: 49px; background: #117865; display: flex; align-items: center; justify-content: center; }
.add svg { width: 14px; height: 14px; margin-top: -3px; }
.status { display: flex; justify-content: space-between; height: 20px; overflow: hidden; color: #444; }
.pg { line-height: 20px; margin: 4px 0 0 1px; letter-spacing: 0; }
.zoom { display: flex; margin-right: 22px; }
.slider { width: 152px; height: 20px; margin-top: 4px; }
.pct { line-height: 20px; margin: 3px 0 0 15px; width: 29px; }
.fit { width: 18px; height: 16px; margin: 8px 0 0 25px; }
</style>
